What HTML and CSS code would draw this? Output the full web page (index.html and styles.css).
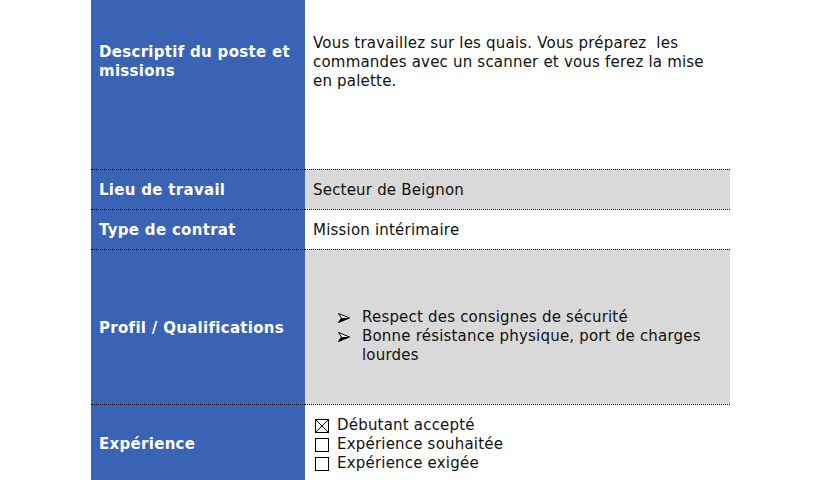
FILE: index.html
```html
<!DOCTYPE html>
<html lang="fr">
<head>
<meta charset="utf-8">
<title>Offre</title>
<link rel="stylesheet" href="styles.css">
</head>
<body>
<div class="table">
  <div class="label row1">Descriptif du poste et missions</div>
  <div class="value row1 desc">Vous travaillez sur les quais. Vous préparez&nbsp; les commandes avec un scanner et vous ferez la mise en palette.</div>

  <div class="label sep r2">Lieu de travail</div>
  <div class="value sep gray r2">Secteur de Beignon</div>

  <div class="label sep r3">Type de contrat</div>
  <div class="value sep r3">Mission intérimaire</div>

  <div class="label sep r4">Profil / Qualifications</div>
  <div class="value sep gray r4 profil">
    <ul class="bullets">
      <li><svg class="arrow" width="12" height="10" viewBox="0 0 12 10"><path d="M0.5 0.5L11.5 5L0.5 9.5L3.5 5Z" fill="#fff" stroke="#000" stroke-width="1" stroke-linejoin="miter"/><path d="M3.5 5L11.5 5L0.5 9.5Z" fill="#000"/></svg><span>Respect des consignes de sécurité</span></li>
      <li><svg class="arrow" width="12" height="10" viewBox="0 0 12 10"><path d="M0.5 0.5L11.5 5L0.5 9.5L3.5 5Z" fill="#fff" stroke="#000" stroke-width="1" stroke-linejoin="miter"/><path d="M3.5 5L11.5 5L0.5 9.5Z" fill="#000"/></svg><span>Bonne résistance physique, port de charges lourdes</span></li>
    </ul>
  </div>

  <div class="label sep r5">Expérience</div>
  <div class="value sep r5 exp">
    <div class="check"><span class="box"><svg width="14" height="14" viewBox="0 0 14 14"><path d="M1 1L13 13M13 1L1 13" stroke="#000" stroke-width="1"/></svg></span>Débutant accepté</div>
    <div class="check"><span class="box"></span>Expérience souhaitée</div>
    <div class="check"><span class="box"></span>Expérience exigée</div>
  </div>
</div>
</body>
</html>
```
FILE: styles.css
```css
html, body {
  margin: 0;
  padding: 0;
  background: #fff;
}
body {
  font-family: "DejaVu Sans", Verdana, sans-serif;
  font-size: 15px;
  color: #111;
  overflow: hidden;
}
.table {
  display: grid;
  grid-template-columns: 214px 425px;
  margin-left: 91px;
  margin-top: -47px;
}
.label {
  background: #3a63b6;
  color: #fff;
  font-weight: bold;
  font-size: 15px;
  letter-spacing: 0.3px;
  padding: 2px 8px 0;
  box-sizing: border-box;
  display: flex;
  align-items: center;
  line-height: 19px;
}
.value {
  padding: 2px 8px 0;
  box-sizing: border-box;
  display: flex;
  align-items: center;
  line-height: 19px;
  letter-spacing: 0.2px;
}
.sep {
  border-top: 1px dotted #000;
}
.gray {
  background: #d9d9d9;
}
.row1 { height: 216px; }
.label.row1 { padding-top: 1px; }
.desc {
  align-items: flex-start;
  padding-top: 81px;
  padding-right: 16px;
}
.r2, .r3 { height: 40px; }
.r4 { height: 155px; }
.r5 { height: 77px; }
.profil {
  align-items: flex-start;
  padding-top: 58px;
  padding-right: 24px;
}
.bullets {
  list-style: none;
  margin: 0;
  padding: 0 0 0 25px;
}
.bullets li {
  display: flex;
  align-items: flex-start;
}
.arrow {
  flex: none;
  margin: 5px 12px 0 0;
  display: block;
}
.exp {
  flex-direction: column;
  align-items: flex-start;
  justify-content: center;
  padding-left: 10px;
  padding-top: 3px;
}
.check {
  display: flex;
  align-items: center;
  line-height: 19px;
}
.box {
  width: 14px;
  height: 14px;
  border: 1px solid #000;
  box-sizing: border-box;
  margin-right: 8px;
  display: inline-flex;
  overflow: hidden;
  flex: none;
}
.box svg {
  display: block;
  margin: -1px;
  flex: none;
}
```
